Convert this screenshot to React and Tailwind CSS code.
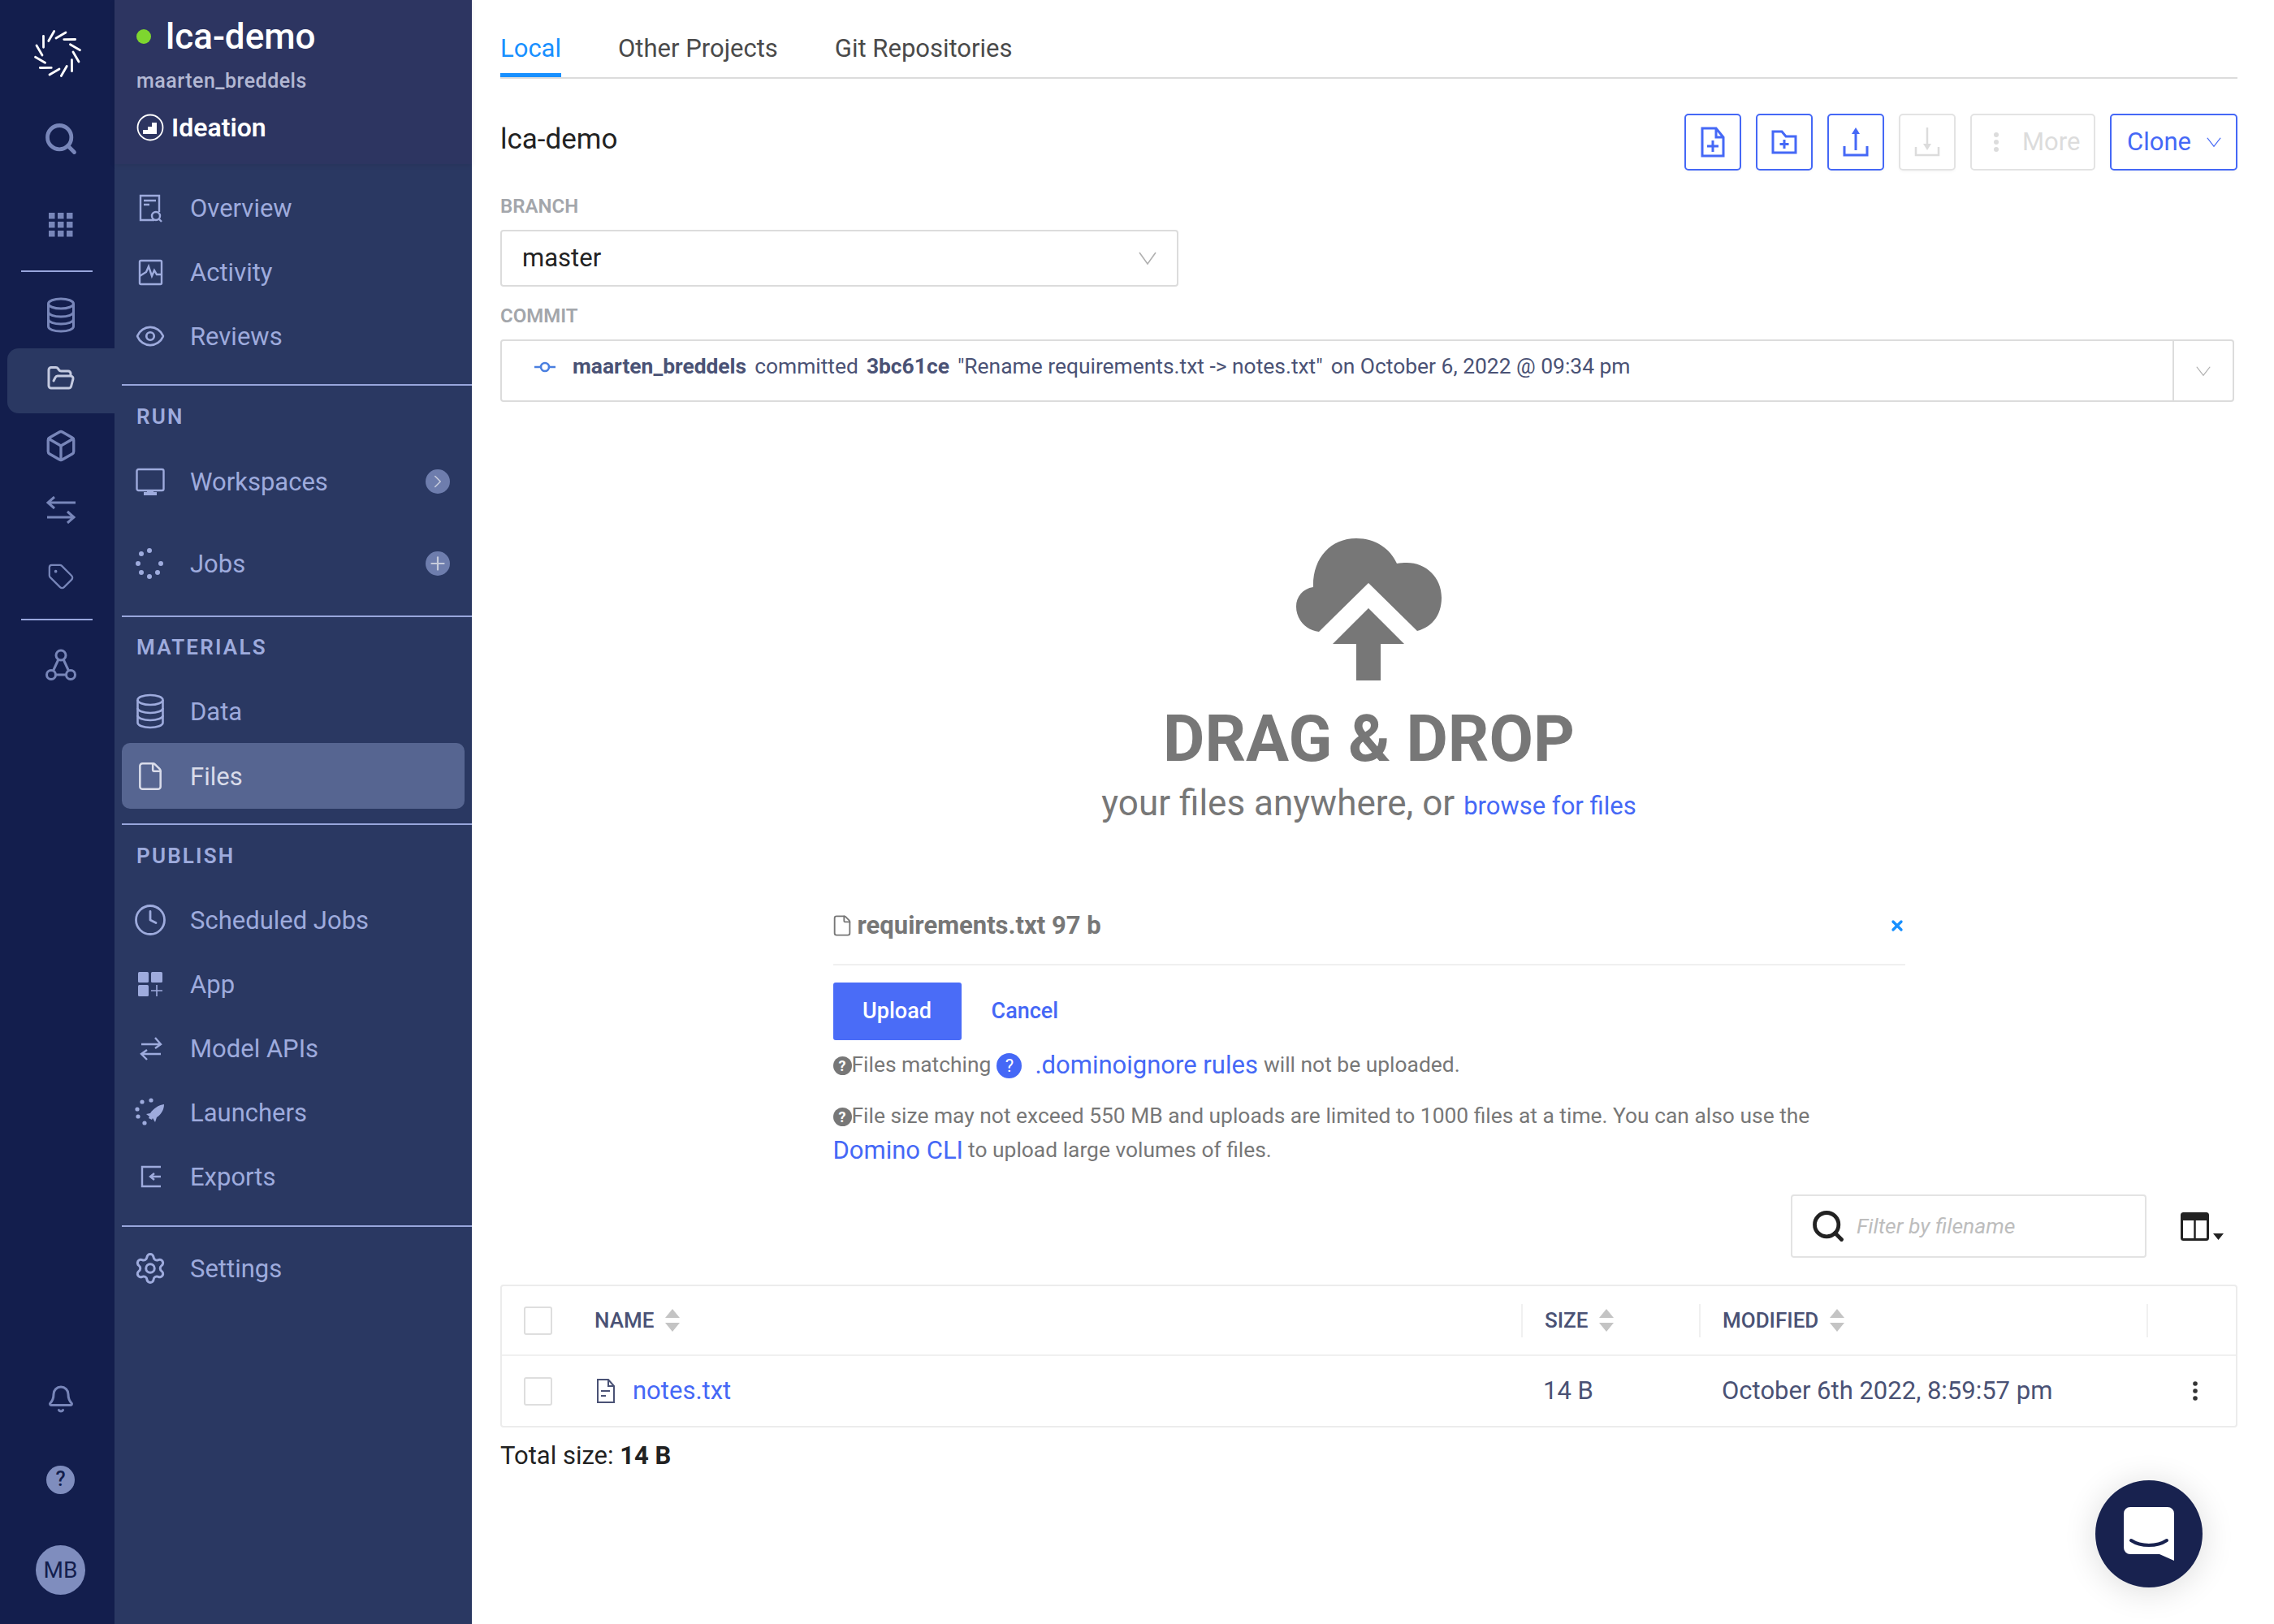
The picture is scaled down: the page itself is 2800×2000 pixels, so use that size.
import { Search, FolderOpen, Box, Tag, Eye, Clock, Settings, File, ChevronRight, Plus, Bell, X } from 'lucide-react'

const I = ({ w = 36, h = 36, vb = '0 0 36 36', className = '', children, ...rest }) => (
  <svg width={w} height={h} viewBox={vb} fill="none" stroke="currentColor" strokeWidth="2.4" className={`shrink-0 ${className}`} {...rest}>{children}</svg>
)

const Logo = () => (
  <svg width="64" height="64" viewBox="-32 -32 64 64" className="shrink-0">
    {[0, 30, 60, 90, 120, 150, 180, 210, 240, 270, 300, 330].map(a => (
      <line key={a} x1="-2" y1="-19" x2="10" y2="-26" stroke="white" strokeWidth="2.8" strokeLinecap="round" transform={`rotate(${a})`} />
    ))}
  </svg>
)

const Vee = ({ w = 22, h = 16, className = '' }) => (
  <svg width={w} height={h} viewBox="0 0 22 16" fill="none" stroke="currentColor" strokeWidth="1.6" preserveAspectRatio="none" className={`shrink-0 ${className}`}>
    <path d="M1 1l10 14L21 1" />
  </svg>
)

const DbIcon = ({ sw = 3 }) => (
  <I w={36} h={44} vb="0 0 36 44" strokeWidth={sw}>
    <ellipse cx="18" cy="8" rx="15.500" ry="6" />
    <path d="M2.500 8v28c0 3.500 7 6 15.500 6s15.500-2.500 15.500-6V8" />
    <path d="M2.500 18c0 3.500 7 6 15.500 6s15.500-2.500 15.500-6M2.500 27c0 3.500 7 6 15.500 6s15.500-2.500 15.500-6" />
  </I>
)

const OverviewIcon = () => (
  <I>
    <path d="M29 23V3H6v30h17" />
    <path d="M10 9h15M10 14h7" />
    <circle cx="25" cy="28" r="5" />
    <path d="M29 32l3 3" />
  </I>
)
const ActivityIcon = () => (
  <I>
    <rect x="5" y="4" width="27" height="29" rx="1.5" />
    <path d="M5 23l8-5 3-7 4 12 3-7 3 5h6" />
  </I>
)
const MonitorIcon = () => (
  <I>
    <rect x="1.5" y="3" width="33" height="26" rx="2" />
    <path d="M10 33h16" strokeWidth="4" />
    <path d="M14 30h8" strokeWidth="3" />
  </I>
)
const JobsIcon = () => (
  <svg width="36" height="40" viewBox="0 0 36 40" fill="currentColor" className="shrink-0">
    <circle cx="17" cy="4" r="3" /><circle cx="7" cy="8" r="3" /><circle cx="3" cy="20" r="3" /><circle cx="7" cy="31" r="3" />
    <circle cx="17" cy="36" r="3" /><circle cx="27" cy="31" r="3" /><circle cx="31" cy="20" r="3" />
  </svg>
)
const AppIcon = () => (
  <svg width="36" height="36" viewBox="0 0 36 36" className="shrink-0">
    <rect x="3" y="3" width="13" height="13" rx="1.5" fill="currentColor" />
    <rect x="19" y="3" width="14" height="13" rx="1.5" fill="currentColor" />
    <rect x="3" y="19" width="13" height="14" rx="1.5" fill="currentColor" />
    <path d="M26 19v14M19 26h14" stroke="currentColor" strokeWidth="1.6" />
  </svg>
)
const SwapIcon = () => (
  <I>
    <path d="M7 13h24M24 5l7 8-7 5M31 25H7M14 20l-7 5 7 7" />
  </I>
)
const RocketIcon = () => (
  <svg width="38" height="36" viewBox="0 0 38 36" fill="currentColor" className="shrink-0">
    <circle cx="9" cy="5" r="2.6" /><circle cx="20" cy="3" r="2.6" /><circle cx="3" cy="14" r="2.6" /><circle cx="4" cy="23" r="2.6" /><circle cx="12" cy="31" r="2.6" />
    <path d="M36 8c-7 1-13 5-17 11l-5 1 4 3-1 2 4 2 1-2 3 5 2-6c6-4 9-10 9-16z" />
  </svg>
)
const ExportIcon = () => (
  <I>
    <path d="M31 6H8v24h23" />
    <path d="M31 18H18M23 14l-5 4 5 4" />
  </I>
)

const SwapRail = () => (
  <I w={36} h={34} vb="0 0 36 34" strokeWidth="3">
    <path d="M2 8h34M10 1L2 8l8 7M34 26H1M26 19l8 7-8 7" />
  </I>
)
const NodesIcon = () => (
  <I w={38} h={40} vb="0 0 38 40" strokeWidth="3">
    <circle cx="19" cy="8" r="6" /><circle cx="7" cy="32" r="5.5" /><circle cx="31" cy="32" r="5.5" />
    <path d="M16 13L9.5 27M22 13l6.5 14M12.5 32h13" />
  </I>
)
const GridIcon = () => (
  <svg width="30" height="30" viewBox="0 0 30 30" fill="currentColor" className="shrink-0">
    {[0, 11, 22].map(y => [0, 11, 22].map(x => <rect key={`${x}-${y}`} x={x} y={y} width="7.5" height="7.5" />))}
  </svg>
)

const RailDivider = ({ className = '' }) => <div className={`h-[2px] w-[88px] bg-[#98a6dc] ml-[26px] ${className}`} />

const Rail = () => (
  <div className="w-[141px] h-full shrink-0 bg-[#131e4d] text-[#7886b9] flex flex-col">
    <div className="h-[132px] flex items-center justify-center shrink-0"><Logo /></div>
    <div className="h-[78px] flex items-center justify-center pl-[8px]"><Search size={44} strokeWidth={2.6} /></div>
    <div className="h-[112px] mt-[11px] flex items-center justify-center pl-[8px]"><GridIcon /></div>
    <RailDivider />
    <div className="h-[94px] pt-[12px] flex items-center justify-center pl-[8px]"><DbIcon /></div>
    <div className="h-[80px] w-[132px] ml-[9px] pb-[6px] bg-[#2a3862] rounded-l-[14px] flex items-center justify-center text-[#c4cae0]"><FolderOpen size={36} strokeWidth={2} /></div>
    <div className="h-[79px] flex items-center justify-center pl-[8px]"><Box size={42} strokeWidth={1.9} /></div>
    <div className="h-[79px] flex items-center justify-center pl-[8px]"><SwapRail /></div>
    <div className="h-[85px] flex items-center justify-center pl-[8px]"><Tag size={34} strokeWidth={1.6} /></div>
    <RailDivider className="mt-[10px]" />
    <div className="h-[110px] flex items-center justify-center pl-[8px]"><NodesIcon /></div>
    <div className="flex-1" />
    <div className="h-[90px] flex items-center justify-center pl-[8px]"><Bell size={36} strokeWidth={2} /></div>
    <div className="h-[108px] flex items-center justify-center pl-[8px]">
      <div className="w-[35px] h-[35px] rounded-full bg-[#7f8dbe] text-[#131e4d] flex items-center justify-center text-[25px] font-medium">?</div>
    </div>
    <div className="flex justify-center pl-[8px] pt-[27px] pb-[36px]">
      <div className="w-[61px] h-[61px] rounded-full bg-[#7f8dbe] text-[#131e4d] flex items-center justify-center text-[28px]">MB</div>
    </div>
  </div>
)

const NavItem = ({ icon, label, h = 79, badge, active }) => (
  <div style={{ height: h }} className={`flex items-center ml-[9px] ${active ? 'w-[422px] bg-[#566591] rounded-[10px] text-[#d9dcea]' : 'text-[#9eabdd]'}`}>
    <div className="w-[84px] pr-[14px] flex justify-center shrink-0">{icon}</div>
    <span className="text-[31px] leading-none pt-[1px]">{label}</span>
    {badge && <div className="ml-auto mr-[27px] w-[30px] h-[30px] rounded-full bg-[#6e7dad] text-[#c6cbdc] flex items-center justify-center">{badge}</div>}
  </div>
)
const SideDivider = ({ className }) => <div className={`h-[2px] ml-[9px] bg-[#98a6dc] ${className}`} />
const SectionLabel = ({ className, children }) => (
  <div className={`h-[40px] flex items-center pl-[27px] text-[26px] font-semibold tracking-[2.2px] text-[#9eabdd] ${className}`}>{children}</div>
)

const Sidebar = () => (
  <div className="w-[440px] h-full shrink-0 bg-[#2a3862]">
    <div className="h-[202px] bg-[#2d3561] shadow-[0_2px_6px_rgba(0,0,0,0.08)] pl-[27px] pt-[19px]">
      <div className="flex items-center h-[52px]">
        <div className="w-[18px] h-[18px] rounded-full bg-[#7ed62f]" />
        <span className="ml-[18px] text-[44px] leading-none font-medium text-white">lca-demo</span>
      </div>
      <div className="mt-[13px] text-[25px] leading-[32px] font-medium tracking-[0.5px] text-[#b3b8d3]">maarten_breddels</div>
      <div className="mt-[23px] flex items-center h-[36px] text-white">
        <svg width="34" height="34" viewBox="0 0 34 34" className="shrink-0">
          <circle cx="17" cy="17" r="15.5" fill="none" stroke="white" strokeWidth="1.8" />
          <path d="M8 25v-5h6v-4h5v-5h6v14z" fill="white" />
        </svg>
        <span className="ml-[9px] text-[32px] font-semibold leading-none">Ideation</span>
      </div>
    </div>
    <div className="pt-[14px]">
      <NavItem icon={<OverviewIcon />} label="Overview" />
      <NavItem icon={<ActivityIcon />} label="Activity" />
      <NavItem icon={<Eye size={38} strokeWidth={1.7} />} label="Reviews" />
    </div>
    <SideDivider className="mt-[20px]" />
    <SectionLabel className="mt-[18px]">RUN</SectionLabel>
    <div className="mt-[9px]">
      <NavItem h={101} icon={<MonitorIcon />} label="Workspaces" badge={<ChevronRight size={26} strokeWidth={1.5} />} />
      <NavItem h={101} icon={<JobsIcon />} label="Jobs" badge={<Plus size={26} strokeWidth={2} />} />
    </div>
    <SideDivider className="mt-[14px]" />
    <SectionLabel className="mt-[17px]">MATERIALS</SectionLabel>
    <div className="mt-[19px]">
      <NavItem icon={<DbIcon sw={2.6} />} label="Data" />
      <NavItem h={81} active icon={<File size={38} strokeWidth={1.6} />} label="Files" />
    </div>
    <SideDivider className="mt-[18px]" />
    <SectionLabel className="mt-[18px]">PUBLISH</SectionLabel>
    <div className="mt-[19px]">
      <NavItem icon={<Clock size={42} strokeWidth={1.6} />} label="Scheduled Jobs" />
      <NavItem icon={<AppIcon />} label="App" />
      <NavItem icon={<SwapIcon />} label="Model APIs" />
      <NavItem icon={<RocketIcon />} label="Launchers" />
      <NavItem icon={<ExportIcon />} label="Exports" />
    </div>
    <SideDivider className="mt-[21px]" />
    <div className="mt-[11px]">
      <NavItem icon={<Settings size={42} strokeWidth={1.7} />} label="Settings" />
    </div>
  </div>
)

const IconBtn = ({ disabled, children }) => (
  <div className={`w-[70px] h-[70px] rounded-[5px] border-2 flex items-center justify-center shadow-[0_2px_3px_rgba(0,0,0,0.03)] ${disabled ? 'border-[#e3e3e3] text-[#dcdcdc]' : 'border-[#4568f6] text-[#4568f6]'}`}>{children}</div>
)

const Toolbar = () => (
  <div className="flex items-center gap-[18px]">
    <IconBtn>
      <I w={30} h={38} vb="0 0 30 38" strokeWidth="3">
        <path d="M2 2h17l9 11v23H2zM19 2v11h9" /><path d="M15 17v14M8 24h14" />
      </I>
    </IconBtn>
    <IconBtn>
      <I w={32} h={30} vb="0 0 32 30" strokeWidth="3">
        <path d="M2 2h11l5 6h12v20H2z" /><path d="M16 12v11M10.5 17.500h11" />
      </I>
    </IconBtn>
    <IconBtn>
      <I w={32} h={36} vb="0 0 32 36" strokeWidth="3">
        <path d="M2 23v11h28V23" /><path d="M16 6v22" /><path d="M16 0l-5 8h10z" fill="currentColor" stroke="none" />
      </I>
    </IconBtn>
    <IconBtn disabled>
      <I w={32} h={36} vb="0 0 32 36" strokeWidth="2.500">
        <path d="M2 24v10h28V24" /><path d="M16 0v22" /><path d="M16 28l-5-8h10z" fill="currentColor" stroke="none" />
      </I>
    </IconBtn>
    <div className="w-[154px] h-[70px] rounded-[5px] border-2 border-[#e3e3e3] flex items-center pl-[26px] text-[#dcdcdc] text-[31px]">
      <svg width="8" height="26" viewBox="0 0 8 26" fill="currentColor" className="shrink-0"><circle cx="4" cy="4" r="3" /><circle cx="4" cy="13" r="3" /><circle cx="4" cy="22" r="3" /></svg>
      <span className="ml-[28px]">More</span>
    </div>
    <div className="w-[157px] h-[70px] rounded-[5px] border-2 border-[#4568f6] flex items-center pl-[19px] text-[#4568f6] text-[31px] shadow-[0_2px_3px_rgba(0,0,0,0.03)]">
      <span>Clone</span>
      <Vee w={18} h={12} className="ml-[19px]" />
    </div>
  </div>
)

const FieldLabel = ({ className, children }) => (
  <div className={`h-[30px] flex items-center text-[24px] font-semibold text-[#a3a6ab] ${className}`}>{children}</div>
)

const Dropzone = () => (
  <div className="flex flex-col items-center">
    <svg width="180" height="175" viewBox="0 0 180 175" fill="#777777" className="mt-[168px]">
      <path d="M28 115C10 113 0 98 0 84C0 72 8 62 21 60C20 25 42 0 74 0C98 0 116 13 124 31C128 30 132 30 136 30C160 30 179 48 179 73C179 94 168 109 149 114L89 55Z" />
      <path d="M89 86L133 130H104V175H74V130H45Z" />
    </svg>
    <div className="mt-[32px] h-[80px] leading-[80px] text-[79px] font-bold text-[#777777]">DRAG &amp; DROP</div>
    <div className="mt-[14px] h-[50px] flex items-center text-[#777777] text-[44px] whitespace-nowrap">
      your files anywhere, or
      <span className="ml-[11px] text-[31px] text-[#4568f6] pt-[8px]">browse for files</span>
    </div>
  </div>
)

const HelpDot = () => (
  <span className="shrink-0 w-[23px] h-[23px] rounded-full bg-[#777777] text-white text-[18px] font-bold flex items-center justify-center">?</span>
)

const UploadPanel = () => (
  <div className="w-[1320px] mx-auto">
    <div className="mt-[106px] h-[40px] flex items-center text-[#777777]">
      <File size={28} strokeWidth={1.6} className="-ml-[3px]" />
      <span className="ml-[5px] text-[31px] font-bold">requirements.txt 97 b</span>
      <X size={20} strokeWidth={4} className="ml-auto text-[#1890ff]" />
    </div>
    <div className="mt-[27px] h-[2px] bg-[#f0f0f0]" />
    <div className="mt-[21px] flex items-center h-[71px]">
      <div className="w-[158px] h-[71px] bg-[#4a6cf7] rounded-[3px] text-white text-[27px] font-medium flex items-center justify-center">Upload</div>
      <span className="ml-[37px] text-[27px] font-medium text-[#4568f6]">Cancel</span>
    </div>
    <div className="mt-[11px] h-[40px] flex items-center text-[26.400px] text-[#777777] whitespace-nowrap">
      <HelpDot />
      <span>Files matching</span>
      <span className="ml-[7px] w-[31px] h-[31px] rounded-full bg-[#4568f6] text-white text-[22px] flex items-center justify-center">?</span>
      <span className="ml-[16px] text-[31px] text-[#4568f6]">.dominoignore rules</span>
      <span className="ml-[7px]">will not be uploaded.</span>
    </div>
    <div className="mt-[23px] h-[40px] flex items-center text-[26.400px] text-[#777777] whitespace-nowrap">
      <HelpDot />
      <span>File size may not exceed 550 MB and uploads are limited to 1000 files at a time. You can also use the</span>
    </div>
    <div className="h-[42px] pt-[2px] flex items-center text-[26.400px] text-[#777777] whitespace-nowrap">
      <span className="text-[31px] text-[#4568f6]">Domino CLI</span>
      <span className="ml-[6px]">to upload large volumes of files.</span>
    </div>
  </div>
)

const SortArrows = () => (
  <svg width="20" height="28" viewBox="0 0 20 28" fill="#c4c4c4" className="shrink-0 ml-[13px]">
    <path d="M10 0l9 11H1zM10 28l9-11H1z" />
  </svg>
)

const HeaderCell = ({ children }) => (
  <div className="flex items-center h-full">
    <div className="border-l-2 border-[#f0f0f0] h-[41px] pl-[27px] flex items-center text-[26px] font-medium text-[#4a5275]">{children}<SortArrows /></div>
  </div>
)
const Checkbox = () => <div className="w-[35px] h-[35px] rounded-[3px] border-2 border-[#dedede] ml-[27px]" />

const FilesTable = () => (
  <div className="mt-[33px] border-2 border-[#ececec] rounded-[4px] h-[176px] flex flex-col">
    <div className="grid grid-cols-[114px_1141px_219px_551px_1fr] h-[86px] items-center border-b-2 border-[#f0f0f0]">
      <Checkbox />
      <div className="flex items-center text-[26px] font-medium text-[#4a5275]">NAME<SortArrows /></div>
      <HeaderCell>SIZE</HeaderCell>
      <HeaderCell>MODIFIED</HeaderCell>
      <div className="flex items-center h-full"><div className="border-l-2 border-[#f0f0f0] h-[41px]" /></div>
    </div>
    <div className="grid grid-cols-[114px_1141px_219px_551px_1fr] flex-1 items-center text-[31px] text-[#4a5275]">
      <Checkbox />
      <div className="flex items-center">
        <svg width="24" height="30" viewBox="0 0 24 30" fill="none" stroke="#4a5275" strokeWidth="2" className="shrink-0 ml-[2px]">
          <path d="M2 1h13l7 8v20H2zM15 1v8h7M6 15h11M6 21h6" />
        </svg>
        <span className="ml-[21px] text-[#4568f6]">notes.txt</span>
      </div>
      <div className="pl-[27px]">14 B</div>
      <div className="pl-[28px]">October 6th 2022, 8:59:57 pm</div>
      <div className="flex justify-end pr-[46px]">
        <svg width="8" height="24" viewBox="0 0 8 24" fill="#333" className="shrink-0"><circle cx="4" cy="3" r="2.800" /><circle cx="4" cy="12" r="2.800" /><circle cx="4" cy="21" r="2.800" /></svg>
      </div>
    </div>
  </div>
)

export default function App() {
  return (
    <div className="w-[2800px] h-[2000px] flex bg-white overflow-hidden relative font-['Roboto',sans-serif]">
      <Rail />
      <Sidebar />
      <div className="w-[2139px] ml-[35px] shrink-0">
        <div className="h-[97px] border-b-2 border-[#dcdcdc] flex items-start text-[31px] text-[#4a4a4a]">
          <div className="h-[95px] border-b-[5px] border-[#1890ff] text-[#1890ff] pt-[39px] leading-[42px]">Local</div>
          <div className="ml-[70px] pt-[39px] leading-[42px]">Other Projects</div>
          <div className="ml-[70px] pt-[39px] leading-[42px]">Git Repositories</div>
        </div>
        <div className="mt-[43px] h-[70px] flex items-center justify-between">
          <span className="text-[35px] text-[#222] pb-[6px]">lca-demo</span>
          <Toolbar />
        </div>
        <FieldLabel className="mt-[29px]">BRANCH</FieldLabel>
        <div className="mt-[14px] w-[835px] h-[70px] rounded-[4px] border-2 border-[#dcdcdc] flex items-center pl-[25px] pr-[25px] text-[31px] text-[#222]">
          master
          <Vee className="ml-auto text-[#b0b0b0]" />
        </div>
        <FieldLabel className="mt-[21px]">COMMIT</FieldLabel>
        <div className="mt-[14px] w-[2135px] h-[77px] rounded-[4px] border-2 border-[#dcdcdc] flex items-center text-[26.400px] text-[#4a5275] whitespace-nowrap">
          <div className="flex-1 flex items-center pl-[40px] pb-[9px] h-full">
            <svg width="26" height="16" viewBox="0 0 26 16" fill="none" stroke="#4a7fe0" strokeWidth="2.600" className="shrink-0">
              <circle cx="13" cy="8" r="5" /><path d="M0 8h8M18 8h8" />
            </svg>
            <span className="ml-[21px] font-bold">maarten_breddels</span>
            <span className="ml-[10px]">committed</span>
            <span className="ml-[10px] font-bold">3bc61ce</span>
            <span className="ml-[10px]">"Rename requirements.txt -&gt; notes.txt"</span>
            <span className="ml-[10px]">on October 6, 2022 @ 09:34 pm</span>
          </div>
          <div className="w-[74px] h-full border-l-2 border-[#dcdcdc] flex items-center justify-center">
            <Vee w={18} h={12} className="text-[#b0b0b0]" />
          </div>
        </div>
        <Dropzone />
        <UploadPanel />
        <div className="mt-[34px] flex items-center justify-end">
          <div className="w-[438px] h-[78px] rounded-[4px] border-2 border-[#e3e3e3] flex items-center pl-[22px]">
            <Search size={44} strokeWidth={2.6} className="text-[#222]" />
            <span className="ml-[13px] text-[26.500px] italic text-[#bdbdbd]">Filter by filename</span>
          </div>
          <div className="w-[112px] flex items-center pl-[42px] pt-[2px]">
            <svg width="54" height="36" viewBox="0 0 54 36" className="shrink-0">
              <rect x="1.500" y="1.500" width="32" height="32" rx="2" fill="none" stroke="#222" strokeWidth="3" />
              <rect x="1" y="1" width="33" height="9" rx="2" fill="#222" />
              <path d="M17.500 8v26" stroke="#222" strokeWidth="2.500" />
              <path d="M40 26h13l-6.500 8z" fill="#222" />
            </svg>
          </div>
        </div>
        <FilesTable />
        <div className="mt-[15px] h-[40px] flex items-center text-[31px] text-[#222] whitespace-pre">
          Total size: <b className="font-bold">14 B</b>
        </div>
      </div>
      <div className="absolute left-[2580px] top-[1823px] w-[132px] h-[132px] rounded-full bg-[#18224f] shadow-[0_4px_40px_rgba(0,0,0,0.14)] flex items-center justify-center">
        <svg width="62" height="66" viewBox="0 0 62 66" className="shrink-0">
          <path d="M8 0h46a8 8 0 0 1 8 8v58l-18-8H8a8 8 0 0 1-8-8V8a8 8 0 0 1 8-8z" fill="white" />
          <path d="M9 41c12 8 32 8 44 0" fill="none" stroke="#18224f" strokeWidth="4" strokeLinecap="round" />
        </svg>
      </div>
    </div>
  )
}
